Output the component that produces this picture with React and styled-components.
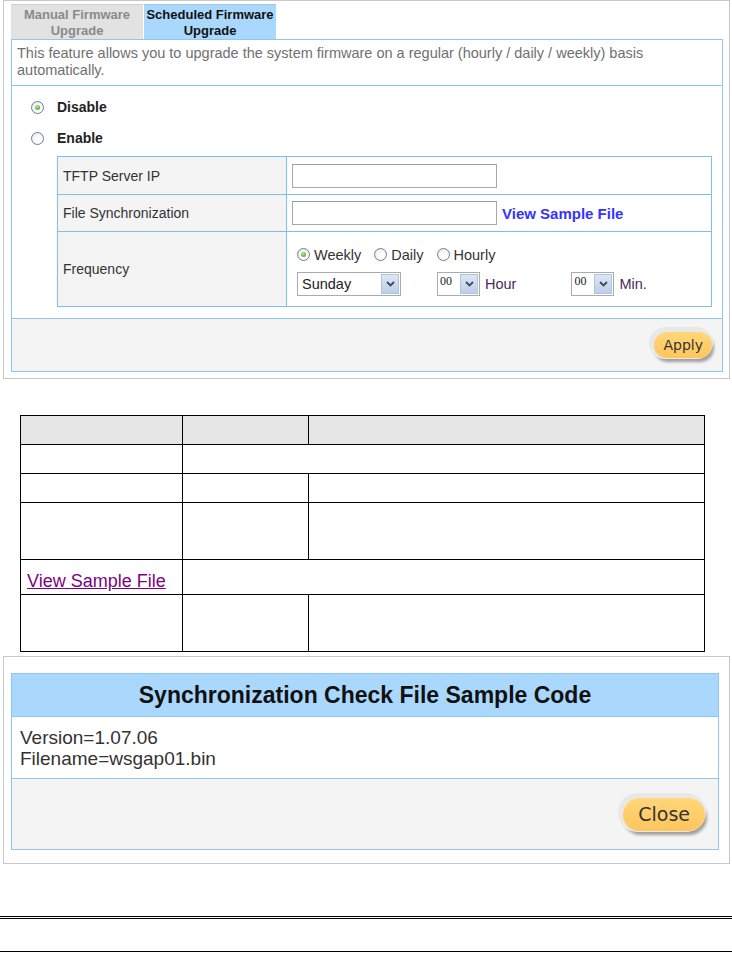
import styled, { createGlobalStyle, css } from 'styled-components'

const Global = createGlobalStyle`
  html, body {
    margin: 0;
    padding: 0;
    background: #fff;
  }
  body {
    font-family: "Liberation Sans", Arial, sans-serif;
    color: #333;
  }
`

const Page = styled.div`
  width: 732px;
`

const Frame = styled.div`
  box-sizing: border-box;
  width: 727px;
  margin: 0 0 0 3px;
  border: 1px solid #c8c8c8;
  padding: ${({ $pad }) => $pad};
`

const Tabs = styled.div`
  display: flex;
  gap: 1px;
`

const Tab = styled.div`
  box-sizing: border-box;
  width: 132px;
  height: 35px;
  padding-top: 2px;
  text-align: center;
  font-size: 13px;
  font-weight: bold;
  line-height: 16px;
  color: ${({ $active }) => ($active ? '#111' : '#8a8a8a')};
  background: ${({ $active }) => ($active ? '#aad8fd' : '#e2e2e2')};
  border-top: 1px solid ${({ $active }) => ($active ? '#9cc7ea' : '#d0d0d0')};
`

const Panel = styled.div`
  border: 1px solid #8cc8f3;
  background: #fff;
`

const Description = styled.div`
  padding: 5px 6px 6px 5px;
  font-size: 14.5px;
  line-height: 17px;
  color: #707070;
  border-bottom: 1px solid #8cc8f3;
`

const ModeList = styled.div`
  display: flex;
  flex-direction: column;
  gap: 11px;
  padding: 11px 0 0 19px;
`

const ModeRow = styled.label`
  display: flex;
  align-items: center;
  gap: 13px;
  height: 20px;
  font-size: 14px;
  font-weight: bold;
  color: #222;
`

const Radio = styled.span`
  position: relative;
  display: inline-block;
  flex: none;
  box-sizing: border-box;
  width: ${({ $size }) => $size}px;
  height: ${({ $size }) => $size}px;
  border-radius: 50%;
  border: 1px solid #6f7f8f;
  background: radial-gradient(circle at 60% 60%, #ffffff 30%, #dcdfe3 100%);
  ${({ $checked }) =>
    $checked &&
    css`
      &::after {
        content: '';
        position: absolute;
        inset: 3px;
        border-radius: 50%;
        background: radial-gradient(circle at 40% 35%, #a6ec8e, #2f9e1a);
      }
    `}
`

const SettingsTable = styled.table`
  border-collapse: collapse;
  margin: 8px 11px 11px 45px;
  width: 655px;
  font-size: 14px;
`

const LabelCell = styled.td`
  box-sizing: border-box;
  width: 229px;
  height: ${({ $h }) => $h}px;
  padding: 0 5px;
  background: #f4f4f4;
  border: 1px solid #7fbff0;
  color: #333;
`

const ValueCell = styled.td`
  height: ${({ $h }) => $h}px;
  padding: 0 5px;
  border: 1px solid #7fbff0;
  background: #fff;
  vertical-align: middle;
`

const ValueLine = styled.div`
  display: flex;
  align-items: center;
`

const TextInput = styled.div`
  box-sizing: border-box;
  width: 205px;
  height: 24px;
  border: 1px solid #a9a9a9;
  border-top-color: #9a9a9a;
  background: #fff;
`

const BlueLink = styled.span`
  margin-left: 5px;
  font-size: 15px;
  font-weight: bold;
  color: #3434ff;
`

const FreqBlock = styled.div`
  display: flex;
  flex-direction: column;
  gap: 9px;
  padding: 4px 0 0 5px;
`

const FreqOptions = styled.div`
  display: flex;
  align-items: center;
  gap: 13px;
  font-size: 14.5px;
  color: #333;
`

const FreqOption = styled.span`
  display: inline-flex;
  align-items: center;
  gap: 4px;
`

const SelectBox = styled.div`
  display: inline-flex;
  box-sizing: border-box;
  width: ${({ $w }) => $w}px;
  height: 24px;
  border: 1px solid #a5acb5;
  background: #fff;
  margin-right: ${({ $mr }) => $mr || 0}px;
`

const SelectValue = styled.span`
  flex: 1;
  padding-left: ${({ $small }) => ($small ? 2 : 4)}px;
  font-family: ${({ $small }) =>
    $small ? '"Liberation Serif", "Times New Roman", serif' : '"Liberation Sans", Arial, sans-serif'};
  font-size: ${({ $small }) => ($small ? 12 : 14.5)}px;
  line-height: ${({ $small }) => ($small ? 16 : 22)}px;
  color: #222;
`

const SelectArrow = styled.span`
  display: flex;
  align-items: center;
  justify-content: center;
  box-sizing: border-box;
  width: 18px;
  margin: 1px;
  border: 1px solid #b3c3d9;
  background: linear-gradient(#dde7f4, #bccfe8);
`

const UnitText = styled.span`
  font-size: 14.5px;
  color: #4a2a5c;
  margin-right: ${({ $mr }) => $mr || 0}px;
`

const Footer = styled.div`
  display: flex;
  justify-content: flex-end;
  align-items: center;
  height: ${({ $h }) => $h}px;
  padding-right: ${({ $pr }) => $pr}px;
  background: #f4f4f4;
  border-top: 1px solid #8cc8f3;
`

const PillButton = styled.button`
  box-sizing: border-box;
  height: ${({ $h }) => $h}px;
  padding: 0 ${({ $px }) => $px}px;
  border: none;
  border-radius: 999px;
  background: linear-gradient(#ffd77a, #ffc55c);
  font-family: "DejaVu Sans", Verdana, sans-serif;
  font-size: ${({ $fs }) => $fs}px;
  color: #333;
  box-shadow: -2px -2px 0 3px #e8e8e8, 1px 3px 3px 1px rgba(0, 0, 0, 0.35);
  cursor: pointer;
`

const DocTable = styled.table`
  border-collapse: collapse;
  margin: 36px 0 0 20px;
  width: 685px;
`

const DocCell = styled.td`
  height: ${({ $h }) => $h}px;
  padding: 0 0 0 6px;
  border: 1px solid #000;
  background: ${({ $head }) => ($head ? '#e6e6e6' : '#fff')};
  width: ${({ $w }) => ($w ? `${$w}px` : 'auto')};
  vertical-align: bottom;
`

const SampleLink = styled.a`
  display: inline-block;
  padding-bottom: 2px;
  font-size: 18px;
  color: #800080;
  text-decoration: underline;
`

const SampleFrame = styled(Frame)`
  margin-top: 4px;
`

const SampleHeader = styled.div`
  height: 42px;
  display: flex;
  align-items: center;
  justify-content: center;
  background: #aad8fd;
  border-bottom: 1px solid #8cc8f3;
  font-size: 23px;
  font-weight: bold;
  color: #111;
`

const SampleBody = styled.div`
  padding: 10px 8px 0;
  height: 51px;
  font-size: 19px;
  line-height: 21px;
  color: #333;
`

const DoubleRule = styled.div`
  border-top: 3px double #000;
  margin-top: ${({ $mt }) => $mt}px;
`

function Chevron() {
  return (
    <svg width="9" height="6" viewBox="0 0 9 6">
      <path d="M1 1 L4.5 4.5 L8 1" fill="none" stroke="#3c4a5c" strokeWidth="1.8" />
    </svg>
  )
}

function Select({ width, value, small, mr }) {
  return (
    <SelectBox $w={width} $mr={mr}>
      <SelectValue $small={small}>{value}</SelectValue>
      <SelectArrow>
        <Chevron />
      </SelectArrow>
    </SelectBox>
  )
}

export default function App() {
  return (
    <Page>
      <Global />
      <Frame $pad="3px 6px 6px 7px">
        <Tabs>
          <Tab>
            Manual Firmware
            <br />
            Upgrade
          </Tab>
          <Tab $active>
            Scheduled Firmware
            <br />
            Upgrade
          </Tab>
        </Tabs>
        <Panel>
          <Description>
            This feature allows you to upgrade the system firmware on a regular (hourly / daily / weekly) basis
            automatically.
          </Description>
          <ModeList>
            <ModeRow>
              <Radio $size={13} $checked />
              Disable
            </ModeRow>
            <ModeRow>
              <Radio $size={13} />
              Enable
            </ModeRow>
          </ModeList>
          <SettingsTable>
            <tbody>
              <tr>
                <LabelCell $h={37}>TFTP Server IP</LabelCell>
                <ValueCell $h={37}>
                  <TextInput />
                </ValueCell>
              </tr>
              <tr>
                <LabelCell $h={36}>File Synchronization</LabelCell>
                <ValueCell $h={36}>
                  <ValueLine>
                    <TextInput />
                    <BlueLink>View Sample File</BlueLink>
                  </ValueLine>
                </ValueCell>
              </tr>
              <tr>
                <LabelCell $h={74}>Frequency</LabelCell>
                <ValueCell $h={74}>
                  <FreqBlock>
                    <FreqOptions>
                      <FreqOption>
                        <Radio $size={13} $checked />
                        Weekly
                      </FreqOption>
                      <FreqOption>
                        <Radio $size={13} />
                        Daily
                      </FreqOption>
                      <FreqOption>
                        <Radio $size={13} />
                        Hourly
                      </FreqOption>
                    </FreqOptions>
                    <ValueLine>
                      <Select width={104} value="Sunday" mr={36} />
                      <Select width={43} value="00" small mr={5} />
                      <UnitText $mr={55}>Hour</UnitText>
                      <Select width={43} value="00" small mr={5} />
                      <UnitText>Min.</UnitText>
                    </ValueLine>
                  </FreqBlock>
                </ValueCell>
              </tr>
            </tbody>
          </SettingsTable>
          <Footer $h={52} $pr={10}>
            <PillButton $h={26} $px={9} $fs={14}>
              Apply
            </PillButton>
          </Footer>
        </Panel>
      </Frame>

      <DocTable>
        <tbody>
          <tr>
            <DocCell $head $h={28} $w={155} />
            <DocCell $head $w={119} />
            <DocCell $head />
          </tr>
          <tr>
            <DocCell $h={28} />
            <DocCell colSpan={2} />
          </tr>
          <tr>
            <DocCell $h={28} />
            <DocCell />
            <DocCell />
          </tr>
          <tr>
            <DocCell $h={56} />
            <DocCell />
            <DocCell />
          </tr>
          <tr>
            <DocCell $h={34}>
              <SampleLink>View Sample File</SampleLink>
            </DocCell>
            <DocCell colSpan={2} />
          </tr>
          <tr>
            <DocCell $h={56} />
            <DocCell />
            <DocCell />
          </tr>
        </tbody>
      </DocTable>

      <SampleFrame $pad="16px 10px 13px 7px">
        <Panel>
          <SampleHeader>Synchronization Check File Sample Code</SampleHeader>
          <SampleBody>
            Version=1.07.06
            <br />
            Filename=wsgap01.bin
          </SampleBody>
          <Footer $h={70} $pr={13}>
            <PillButton $h={33} $px={15} $fs={19}>
              Close
            </PillButton>
          </Footer>
        </Panel>
      </SampleFrame>

      <DoubleRule $mt={52} />
      <DoubleRule $mt={32} />
    </Page>
  )
}
